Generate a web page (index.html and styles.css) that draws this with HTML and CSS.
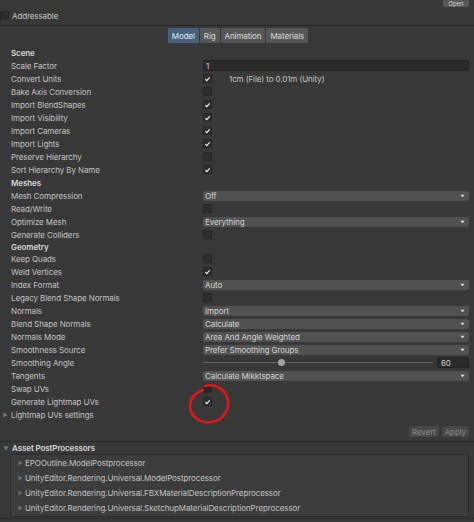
FILE: index.html
```html
<!DOCTYPE html>
<html>
<head>
<meta charset="utf-8">
<link rel="stylesheet" href="styles.css">
</head>
<body>
<div class="page">
  <div class="topbar"><span class="btn open">Open</span></div>
  <div class="addr"><span class="cb addr-cb"></span><span class="addr-label">Addressable</span></div>
  <div class="sep"></div>
  <div class="tabs">
    <span class="tab active">Model</span><span class="tab">Rig</span><span class="tab">Animation</span><span class="tab">Materials</span>
  </div>

  <div class="rows">
    <div class="row head"><span class="lbl">Scene</span></div>
    <div class="row"><span class="lbl">Scale Factor</span><div class="field">1</div></div>
    <div class="row"><span class="lbl">Convert Units</span><div class="val"><span class="cb on"><svg viewBox="0 0 8 8"><path d="M1.6 4.3 L3.2 5.9 L6.4 2.2"/></svg></span><span class="note">1cm (File) to 0.01m (Unity)</span></div></div>
    <div class="row"><span class="lbl">Bake Axis Conversion</span><div class="val"><span class="cb"></span></div></div>
    <div class="row"><span class="lbl">Import BlendShapes</span><div class="val"><span class="cb on"><svg viewBox="0 0 8 8"><path d="M1.6 4.3 L3.2 5.9 L6.4 2.2"/></svg></span></div></div>
    <div class="row"><span class="lbl">Import Visibility</span><div class="val"><span class="cb on"><svg viewBox="0 0 8 8"><path d="M1.6 4.3 L3.2 5.9 L6.4 2.2"/></svg></span></div></div>
    <div class="row"><span class="lbl">Import Cameras</span><div class="val"><span class="cb on"><svg viewBox="0 0 8 8"><path d="M1.6 4.3 L3.2 5.9 L6.4 2.2"/></svg></span></div></div>
    <div class="row"><span class="lbl">Import Lights</span><div class="val"><span class="cb on"><svg viewBox="0 0 8 8"><path d="M1.6 4.3 L3.2 5.9 L6.4 2.2"/></svg></span></div></div>
    <div class="row"><span class="lbl">Preserve Hierarchy</span><div class="val"><span class="cb"></span></div></div>
    <div class="row"><span class="lbl">Sort Hierarchy By Name</span><div class="val"><span class="cb on"><svg viewBox="0 0 8 8"><path d="M1.6 4.3 L3.2 5.9 L6.4 2.2"/></svg></span></div></div>

    <div class="row head"><span class="lbl">Meshes</span></div>
    <div class="row"><span class="lbl">Mesh Compression</span><div class="dd"><span>Off</span><svg viewBox="0 0 6 4"><path d="M0.5 0.5 H5.5 L3 3.5 Z"/></svg></div></div>
    <div class="row"><span class="lbl">Read/Write</span><div class="val"><span class="cb"></span></div></div>
    <div class="row"><span class="lbl">Optimize Mesh</span><div class="dd"><span>Everything</span><svg viewBox="0 0 6 4"><path d="M0.5 0.5 H5.5 L3 3.5 Z"/></svg></div></div>
    <div class="row"><span class="lbl">Generate Colliders</span><div class="val"><span class="cb"></span></div></div>

    <div class="row head short"><span class="lbl">Geometry</span></div>
    <div class="row"><span class="lbl">Keep Quads</span><div class="val"><span class="cb"></span></div></div>
    <div class="row"><span class="lbl">Weld Vertices</span><div class="val"><span class="cb on"><svg viewBox="0 0 8 8"><path d="M1.6 4.3 L3.2 5.9 L6.4 2.2"/></svg></span></div></div>
    <div class="row"><span class="lbl">Index Format</span><div class="dd"><span>Auto</span><svg viewBox="0 0 6 4"><path d="M0.5 0.5 H5.5 L3 3.5 Z"/></svg></div></div>
    <div class="row"><span class="lbl">Legacy Blend Shape Normals</span><div class="val"><span class="cb"></span></div></div>
    <div class="row"><span class="lbl">Normals</span><div class="dd"><span>Import</span><svg viewBox="0 0 6 4"><path d="M0.5 0.5 H5.5 L3 3.5 Z"/></svg></div></div>
    <div class="row"><span class="lbl">Blend Shape Normals</span><div class="dd"><span>Calculate</span><svg viewBox="0 0 6 4"><path d="M0.5 0.5 H5.5 L3 3.5 Z"/></svg></div></div>
    <div class="row"><span class="lbl">Normals Mode</span><div class="dd"><span>Area And Angle Weighted</span><svg viewBox="0 0 6 4"><path d="M0.5 0.5 H5.5 L3 3.5 Z"/></svg></div></div>
    <div class="row"><span class="lbl">Smoothness Source</span><div class="dd"><span>Prefer Smoothing Groups</span><svg viewBox="0 0 6 4"><path d="M0.5 0.5 H5.5 L3 3.5 Z"/></svg></div></div>
    <div class="row"><span class="lbl">Smoothing Angle</span><div class="slider"><div class="track"><span class="thumb"></span></div><div class="num">60</div></div></div>
    <div class="row"><span class="lbl">Tangents</span><div class="dd"><span>Calculate Mikktspace</span><svg viewBox="0 0 6 4"><path d="M0.5 0.5 H5.5 L3 3.5 Z"/></svg></div></div>
    <div class="row"><span class="lbl">Swap UVs</span><div class="val"><span class="cb dark"></span></div></div>
    <div class="row"><span class="lbl">Generate Lightmap UVs</span><div class="val"><span class="cb on"><svg viewBox="0 0 8 8"><path d="M1.6 4.3 L3.2 5.9 L6.4 2.2"/></svg></span></div></div>
    <div class="row fold"><span class="lbl"><svg class="tri" viewBox="0 0 5 6"><path d="M0.5 0.5 L4.5 3 L0.5 5.5 Z"/></svg>Lightmap UVs settings</span></div>
  </div>

  <div class="actions"><span class="btn dim">Revert</span><span class="btn dim">Apply</span></div>
  <div class="sep2"></div>

  <div class="pp-head"><svg class="tri down" viewBox="0 0 6 5"><path d="M0.5 0.5 H5.5 L3 4.5 Z"/></svg><span>Asset PostProcessors</span></div>
  <div class="pp-box">
    <div class="pp-item"><svg class="tri" viewBox="0 0 5 6"><path d="M0.5 0.5 L4.5 3 L0.5 5.5 Z"/></svg><span>EPOOutline.ModelPostprocessor</span></div>
    <div class="pp-item"><svg class="tri" viewBox="0 0 5 6"><path d="M0.5 0.5 L4.5 3 L0.5 5.5 Z"/></svg><span>UnityEditor.Rendering.Universal.ModelPostprocessor</span></div>
    <div class="pp-item"><svg class="tri" viewBox="0 0 5 6"><path d="M0.5 0.5 L4.5 3 L0.5 5.5 Z"/></svg><span>UnityEditor.Rendering.Universal.FBXMaterialDescriptionPreprocessor</span></div>
    <div class="pp-item"><svg class="tri" viewBox="0 0 5 6"><path d="M0.5 0.5 L4.5 3 L0.5 5.5 Z"/></svg><span>UnityEditor.Rendering.Universal.SketchupMaterialDescriptionPreprocessor</span></div>
  </div>
  <div class="sep3"></div>

  <svg class="circle" viewBox="0 0 474 522" width="474" height="522">
    <path d="M205 386 C215 383 224 389 227 397 C231 408 224 420 212 422 C200 424 190 416 190 406 C190 398 195 393 203 390"/>
  </svg>
</div>
</body>
</html>
```

FILE: styles.css
```css
* { box-sizing: border-box; }
html, body {
  margin: 0;
  padding: 0;
  background: #383838;
}
.page {
  position: relative;
  width: 474px;
  height: 522px;
  overflow: hidden;
  background: #383838;
  font-family: Inter, "Noto Sans", sans-serif;
  font-size: 8px;
  letter-spacing: -0.1px;
  color: #c2c2c2;
}
.topbar {
  height: 7px;
  display: flex;
  justify-content: flex-end;
  align-items: flex-start;
  padding-right: 5px;
  overflow: hidden;
}
.btn {
  display: inline-flex;
  align-items: center;
  justify-content: center;
  background: #575757;
  color: #d4d4d4;
  border-radius: 2px;
  padding: 0 3px;
  height: 11px;
  flex: none;
}
.open {
  height: 7px;
  width: 26px;
  font-size: 6px;
  line-height: 7px;
  border-radius: 0 0 2px 2px;
}
.addr {
  margin-top: 3px;
  height: 11px;
  display: flex;
  align-items: center;
}
.addr-cb {
  width: 8px;
  height: 9px;
  margin-right: 3px;
}
.sep {
  margin-top: 4px;
  height: 1px;
  background: #242424;
}
.tabs {
  margin-top: 2px;
  height: 15px;
  display: flex;
  justify-content: center;
  gap: 1px;
  padding-left: 2px;
}
.tab {
  display: flex;
  align-items: center;
  padding: 0 4px;
  background: #565656;
  color: #dcdcdc;
  border-radius: 1px;
}
.tab.active {
  background: #46607f;
  color: #e8e8e8;
}
.rows {
  margin-top: 3px;
}
.row {
  height: 13px;
  display: grid;
  grid-template-columns: 192px 1fr;
  align-items: center;
  padding: 0 5px 0 11px;
}
.row.short { height: 11px; }
.row.head .lbl {
  font-weight: 600;
  color: #d6d6d6;
}
.lbl {
  white-space: nowrap;
  display: flex;
  align-items: center;
}
.row.fold { padding-left: 3px; }
.row.fold .tri { margin-right: 3px; }
.tri {
  width: 5px;
  height: 6px;
  fill: #7e7e7e;
  flex: none;
}
.tri.down {
  width: 6px;
  height: 5px;
}
.val {
  display: flex;
  align-items: center;
}
.cb {
  display: inline-flex;
  align-items: center;
  justify-content: center;
  width: 9px;
  height: 9px;
  background: #2e2e2e;
  border: 1px solid #262626;
  border-radius: 1px;
  flex: none;
}
.cb.dark { background: #242424; }
.cb svg {
  width: 8px;
  height: 8px;
  fill: none;
  stroke: #f0f0f0;
  stroke-width: 1.3;
}
.note {
  margin-left: 17px;
  color: #c4c4c4;
}
.field {
  height: 11px;
  background: #2a2a2a;
  border: 1px solid #232323;
  border-radius: 2px;
  display: flex;
  align-items: center;
  padding-left: 2px;
  color: #cfcfcf;
}
.dd {
  height: 10px;
  background: #515151;
  border-radius: 2px;
  display: flex;
  align-items: center;
  justify-content: space-between;
  padding: 0 4px 0 2px;
  color: #d4d4d4;
}
.dd svg {
  width: 5px;
  height: 4px;
  fill: #e0e0e0;
}
.slider {
  display: flex;
  align-items: center;
  gap: 4px;
}
.track {
  flex: 1;
  height: 1px;
  background: #636363;
  position: relative;
}
.thumb {
  position: absolute;
  left: 75px;
  top: -3px;
  width: 7px;
  height: 7px;
  border-radius: 50%;
  background: #a3a3a3;
}
.num {
  width: 32px;
  height: 11px;
  background: #2a2a2a;
  border: 1px solid #232323;
  border-radius: 2px;
  display: flex;
  align-items: center;
  padding-left: 3px;
  color: #cfcfcf;
}
.actions {
  margin-top: 5px;
  height: 11px;
  display: flex;
  justify-content: flex-end;
  gap: 3px;
  padding-right: 5px;
}
.btn.dim {
  background: #474747;
  color: #8c8c8c;
}
.sep2 {
  margin-top: 4px;
  height: 1px;
  background: #2a2a2a;
}
.pp-head {
  height: 12px;
  display: flex;
  align-items: center;
  padding-left: 3px;
  font-weight: 600;
  color: #d6d6d6;
  gap: 3px;
}
.pp-box {
  margin: 0 5px 0 10px;
  background: #3c3c3c;
  border: 1px solid #2b2b2b;
  padding: 0 0 1px 0;
}
.pp-item {
  height: 15px;
  display: flex;
  align-items: center;
  padding-left: 7px;
  gap: 2px;
  color: #c2c2c2;
  white-space: nowrap;
}
.pp-item .tri { fill: #6e6e6e; }
.sep3 {
  margin-top: 1px;
  height: 1px;
  background: #2a2a2a;
}
.circle {
  position: absolute;
  left: 0;
  top: 0;
  pointer-events: none;
}
.circle path {
  fill: none;
  stroke: #e3161d;
  stroke-width: 2.6;
  stroke-linecap: round;
}
```
